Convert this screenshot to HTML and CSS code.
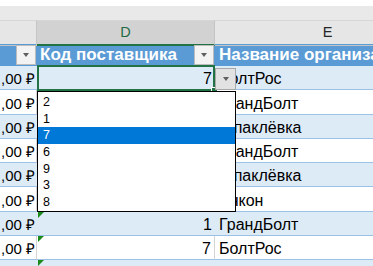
FILE: index.html
```html
<!DOCTYPE html>
<html lang="ru">
<head>
  <meta charset="UTF-8">
  <title>Код поставщика</title>
  <link rel="stylesheet" href="styles.css">
</head>
<body>
  <div class="sheet">
    <div class="bar"></div>

    <div class="row colhead">
      <div class="ch"></div>
      <div class="ch ch-active">D</div>
      <div class="ch">E</div>
    </div>

    <div class="row head">
      <div class="cell hc"><span class="filter"></span></div>
      <div class="cell hc"><span class="htext">Код поставщика</span><span class="filter"></span></div>
      <div class="cell hc"><span class="htext">Название организации</span></div>
    </div>

    <div class="row band">
      <div class="cell money">,00 ₽</div>
      <div class="cell num">7</div>
      <div class="cell name">БолтРос</div>
    </div>
    <div class="row plain">
      <div class="cell money">,00 ₽</div>
      <div class="cell num"></div>
      <div class="cell name">ГрандБолт</div>
    </div>
    <div class="row band">
      <div class="cell money">,00 ₽</div>
      <div class="cell num"></div>
      <div class="cell name">Шпаклёвка</div>
    </div>
    <div class="row plain">
      <div class="cell money">,00 ₽</div>
      <div class="cell num"></div>
      <div class="cell name">ГрандБолт</div>
    </div>
    <div class="row band">
      <div class="cell money">,00 ₽</div>
      <div class="cell num"></div>
      <div class="cell name">Шпаклёвка</div>
    </div>
    <div class="row plain">
      <div class="cell money">,00 ₽</div>
      <div class="cell num"></div>
      <div class="cell name">Анкон</div>
    </div>
    <div class="row band">
      <div class="cell money">,00 ₽</div>
      <div class="cell num warn">1</div>
      <div class="cell name">ГрандБолт</div>
    </div>
    <div class="row plain">
      <div class="cell money">,00 ₽</div>
      <div class="cell num warn">7</div>
      <div class="cell name">БолтРос</div>
    </div>
    <div class="row band">
      <div class="cell money"></div>
      <div class="cell num warn"></div>
      <div class="cell name"></div>
    </div>

    <!-- active cell, its list button and the open list -->
    <div class="active-cell"><span class="handle"></span></div>
    <div class="drop-btn"></div>
    <ul class="pick-list">
      <li>2</li>
      <li>1</li>
      <li class="picked">7</li>
      <li>6</li>
      <li>9</li>
      <li>3</li>
      <li>8</li>
    </ul>
  </div>
</body>
</html>
```

FILE: styles.css
```css
html, body {
  margin: 0;
  overflow: hidden;
  background: #fff;
}
.sheet {
  position: relative;
  width: 373px;
  height: 266px;
  overflow: hidden;
  font-family: 'Liberation Sans', Arial, sans-serif;
  color: #000;
}
.bar {
  margin-top: 6px;
  height: 14px;
  background: #e9e9e9;
}
.row {
  display: grid;
  grid-template-columns: 37px 178px 226px;
}
.colhead {
  height: 24px;
  background: #e6e6e6;
}
.ch {
  box-sizing: border-box;
  border-top: 1px solid #d6d6d6;
  border-right: 1px solid #c4c4c4;
  border-bottom: 1px solid #c4c4c4;
  font-size: 14.5px;
  color: #262626;
  text-align: center;
  line-height: 23px;
}
.ch-active {
  background: #d2d2d2;
  color: #1f6b43;
  border-bottom: 2px solid #217346;
}
.head {
  height: 22px;
  background: #5b9bd5;
}
.cell {
  box-sizing: border-box;
  display: flex;
  align-items: center;
  overflow: hidden;
  white-space: nowrap;
  position: relative;
}
.hc {
  color: #fff;
  font-weight: bold;
  font-size: 17px;
  padding-left: 3px;
}
.hc:last-child {
  padding-left: 4px;
}
.htext {
  flex: 1;
}
.filter {
  flex: none;
  box-sizing: border-box;
  width: 20px;
  height: 20px;
  margin-left: auto;
  margin-right: 1px;
  background: #f3f3f3;
  border: 1px solid #bcbcbc;
  display: flex;
  align-items: center;
  justify-content: center;
}
.filter::after {
  content: '';
  border-left: 3.5px solid transparent;
  border-right: 3.5px solid transparent;
  border-top: 4px solid #5f5f5f;
}
.band, .plain {
  height: 24.25px;
  font-size: 16px;
}
.band .cell, .plain .cell {
  align-items: flex-end;
  line-height: 18px;
  padding-bottom: 1px;
  border-bottom: 1px solid #9bc2e6;
}
.band {
  background: #ddebf7;
}
.plain .cell {
  border-right: 1px solid #d4d4d4;
}
.money {
  justify-content: flex-end;
  padding-right: 2px;
  font-size: 15px;
}
.plain .money {
  padding-right: 1px;
}
.num {
  justify-content: flex-end;
  padding-right: 3px;
}
.name {
  padding-left: 4px;
}
.warn::before {
  content: '';
  position: absolute;
  left: 1px;
  top: 0;
  border-top: 6px solid #1b8a1b;
  border-right: 6px solid transparent;
}
.active-cell {
  position: absolute;
  left: 37px;
  top: 65px;
  width: 174px;
  height: 22px;
  border: 2px solid #217346;
}
.handle {
  position: absolute;
  right: -5px;
  bottom: -5px;
  width: 5px;
  height: 5px;
  background: #217346;
  border: 1px solid #fff;
}
.drop-btn {
  position: absolute;
  left: 215px;
  top: 68px;
  width: 19px;
  height: 20px;
  background: #e2e2e2;
  border: 1px solid #a8a8a8;
  display: flex;
  align-items: center;
  justify-content: center;
}
.drop-btn::after {
  content: '';
  border-left: 3.5px solid transparent;
  border-right: 3.5px solid transparent;
  border-top: 4px solid #5f5f5f;
}
.pick-list {
  position: absolute;
  left: 37px;
  top: 91px;
  width: 197px;
  margin: 0;
  padding: 2px 0 0;
  list-style: none;
  background: #fff;
  border: 1px solid #000;
  font-size: 12.5px;
}
.pick-list li {
  height: 16.7px;
  line-height: 16.7px;
  padding-left: 5px;
}
.pick-list .picked {
  background: #0078d7;
  color: #fff;
}
```
